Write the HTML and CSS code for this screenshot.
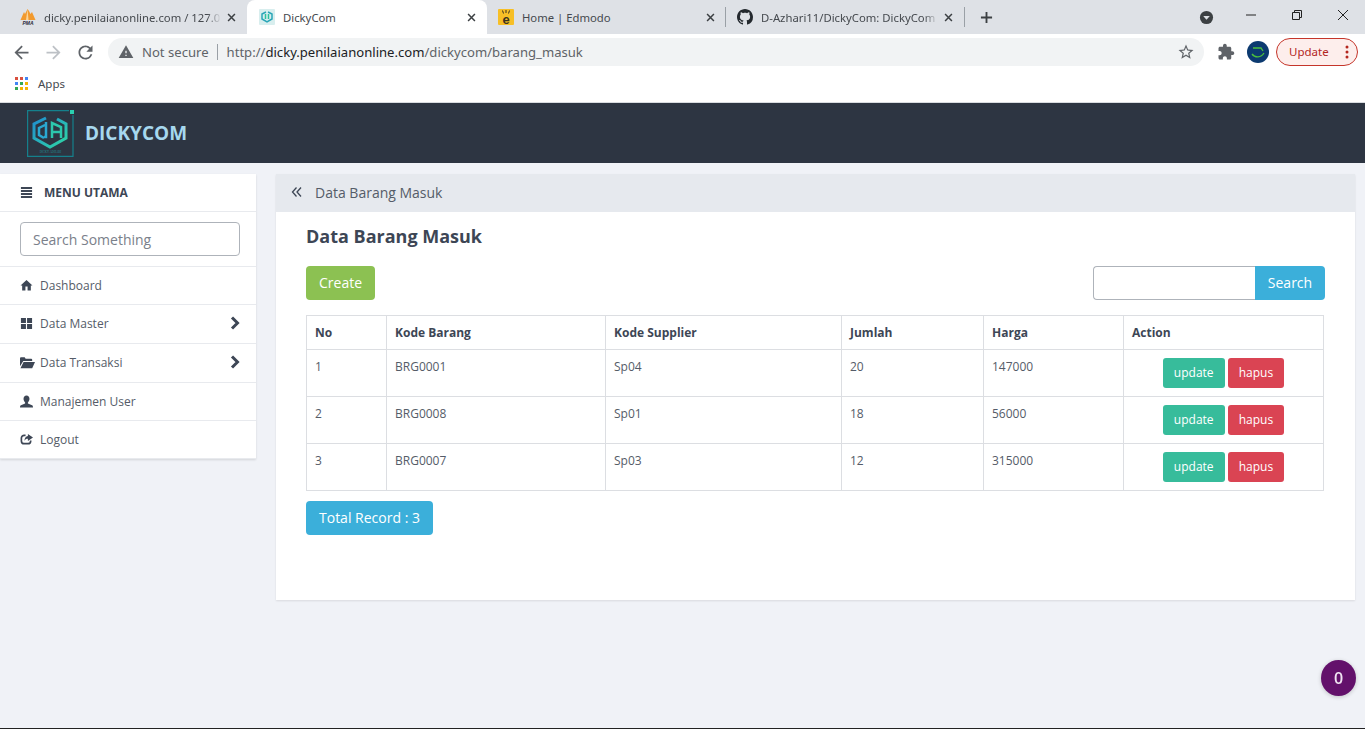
FILE: index.html
```html
<!DOCTYPE html>
<html lang="en">
<head>
    <meta charset="UTF-8">
    <meta name="viewport" content="width=device-width, initial-scale=1.0">
    <title>DickyCom</title>
    <link rel="stylesheet" href="styles.css">
</head>
<body>
    <svg class="defs" width="0" height="0">
        <defs>
            <linearGradient id="logo-grad" x1="0" y1="0" x2="1" y2="1">
                <stop offset="0" stop-color="#1f8fd0"/>
                <stop offset="1" stop-color="#2fd6a4"/>
            </linearGradient>
        </defs>
        <symbol id="tab-x" viewBox="0 0 10 10"><path d="M1.2 1.2l7.6 7.6M8.8 1.2L1.2 8.8" fill="none" stroke="currentColor" stroke-width="1.7"/></symbol>
        <symbol id="chevron" viewBox="0 0 10 14"><path d="M2 1.500L7.500 7 2 12.500" fill="none" stroke="currentColor" stroke-width="3"/></symbol>
    </svg>

    <div class="browser">
        <div class="tabstrip">
            <div class="tab tab-first">
                <svg class="favicon" viewBox="0 0 16 16"><path d="M7.500 0L5 5 4 3 .5 11h15L12 3l-1.500 2L9 2z" fill="#f29a2e"/><path d="M7.500 0l1 11H6z" fill="#fbd59a"/><text x="8" y="16" class="pma">PMA</text></svg>
                <span class="tab-title">dicky.penilaianonline.com / 127.0</span>
                <svg class="tab-close"><use href="#tab-x"/></svg>
            </div>
            <div class="tab tab-active">
                <svg class="favicon" viewBox="0 0 16 16"><rect width="16" height="16" rx="1" fill="#d8eeee"/><path d="M7 3L3 5v5l5 3 5-3V5L9 3" fill="none" stroke="#2aa6b8" stroke-width="1.500"/><path d="M6.500 5v5M9.500 5v5" stroke="#2cc0a0" stroke-width="1.500"/></svg>
                <span class="tab-title plain">DickyCom</span>
                <svg class="tab-close"><use href="#tab-x"/></svg>
            </div>
            <div class="tab tab-edmodo">
                <svg class="favicon" viewBox="0 0 16 16"><rect width="16" height="16" rx="1" fill="#f7bf26"/><text x="8" y="14.500" class="edmodo-e">e</text><path d="M4.500 1.500l1 3M8 1v3M11.500 1.500l-1 3" stroke="#3b3320" stroke-width="1"/></svg>
                <span class="tab-title plain">Home | Edmodo</span>
                <svg class="tab-close"><use href="#tab-x"/></svg>
            </div>
            <div class="tab tab-github">
                <svg class="favicon" viewBox="0 0 16 16"><path fill="#24292e" d="M8 0C3.580 0 0 3.580 0 8c0 3.540 2.290 6.530 5.470 7.590.4.070.55-.17.55-.38 0-.19-.01-.82-.01-1.490-2.010.37-2.530-.49-2.690-.94-.09-.23-.48-.94-.82-1.130-.28-.15-.68-.52-.01-.53.63-.01 1.080.58 1.230.82.72 1.210 1.870.87 2.330.66.07-.52.28-.87.51-1.070-1.780-.2-3.640-.89-3.640-3.950 0-.87.31-1.590.82-2.150-.08-.2-.36-1.020.08-2.120 0 0 .67-.21 2.200.82.64-.18 1.320-.27 2-.27.68 0 1.360.09 2 .27 1.530-1.040 2.200-.82 2.200-.82.44 1.100.16 1.920.08 2.120.51.56.82 1.270.82 2.150 0 3.070-1.870 3.750-3.650 3.950.29.25.54.73.54 1.480 0 1.070-.01 1.930-.01 2.200 0 .21.15.46.55.38A8.013 8.013 0 0016 8c0-4.420-3.580-8-8-8z"/></svg>
                <span class="tab-title">D-Azhari11/DickyCom: DickyCom</span>
                <svg class="tab-close"><use href="#tab-x"/></svg>
            </div>
            <svg class="new-tab" viewBox="0 0 14 14"><path d="M7 1v12M1 7h12" fill="none" stroke="#3c4043" stroke-width="2"/></svg>
            <div class="window-controls">
                <svg class="tab-search" viewBox="0 0 16 16"><circle cx="8" cy="8" r="7" fill="#3c4043"/><path d="M4.500 6.500h7L8 10.500z" fill="#dee1e6"/></svg>
                <svg class="win-btn" viewBox="0 0 12 12"><path d="M1 6h10" stroke="#222" fill="none"/></svg>
                <svg class="win-btn" viewBox="0 0 12 12"><path d="M1.500 3.500h7v7h-7zM3.500 3.500v-2h7v7h-2" stroke="#222" fill="none"/></svg>
                <svg class="win-btn" viewBox="0 0 12 12"><path d="M1 1l10 10M11 1L1 11" stroke="#222" fill="none"/></svg>
            </div>
        </div>

        <div class="toolbar">
            <svg class="nav-icon" viewBox="0 0 24 24"><path fill="#5f6368" d="M20 11H7.830l5.590-5.590L12 4l-8 8 8 8 1.410-1.410L7.830 13H20v-2z"/></svg>
            <svg class="nav-icon" viewBox="0 0 24 24"><path fill="#bdc1c6" d="M12 4l-1.410 1.410L16.170 11H4v2h12.170l-5.580 5.590L12 20l8-8z"/></svg>
            <svg class="nav-icon" viewBox="0 0 24 24"><path fill="#5f6368" d="M17.650 6.350A7.958 7.958 0 0012 4c-4.420 0-7.990 3.580-7.990 8s3.570 8 7.990 8c3.730 0 6.840-2.550 7.730-6h-2.080A5.990 5.990 0 0112 18c-3.310 0-6-2.690-6-6s2.690-6 6-6c1.660 0 3.140.69 4.220 1.780L13 11h7V4l-2.350 2.350z"/></svg>
            <div class="omnibox">
                <svg class="warn-icon" viewBox="0 0 24 24"><path fill="#5f6368" d="M1 21h22L12 2 1 21zm12-3h-2v-2h2v2zm0-4h-2v-4h2v4z"/></svg>
                <span class="not-secure">Not secure</span>
                <span class="url"><span class="url-dim">http://</span>dicky.penilaianonline.com<span class="url-dim">/dickycom/barang_masuk</span></span>
                <svg class="star-icon" viewBox="0 0 24 24"><path fill="#5f6368" d="M22 9.240l-7.190-.62L12 2 9.190 8.630 2 9.240l5.460 4.730L5.820 21 12 17.270 18.180 21l-1.630-7.030L22 9.240zM12 15.400l-3.760 2.270 1-4.280-3.320-2.880 4.380-.38L12 6.100l1.710 4.040 4.380.38-3.320 2.880 1 4.280L12 15.400z"/></svg>
            </div>
            <svg class="puzzle-icon" viewBox="0 0 24 24"><path fill="#5f6368" d="M20.500 11H19V7c0-1.100-.9-2-2-2h-4V3.500C13 2.120 11.880 1 10.500 1S8 2.120 8 3.500V5H4c-1.100 0-1.990.9-1.990 2v3.800H3.500c1.490 0 2.700 1.210 2.700 2.700s-1.210 2.700-2.700 2.700H2V20c0 1.100.9 2 2 2h3.800v-1.500c0-1.490 1.210-2.700 2.700-2.700 1.490 0 2.700 1.210 2.700 2.700V22H17c1.100 0 2-.9 2-2v-4h1.500c1.380 0 2.500-1.120 2.500-2.500S21.880 11 20.500 11z"/></svg>
            <svg class="avatar" viewBox="0 0 22 22"><circle cx="11" cy="11" r="11" fill="#0c3a70"/><path d="M6 7h8l2 3M5 13c3 4 9 4 12-1" fill="none" stroke="#4cc23c" stroke-width="1.300"/></svg>
            <div class="update-pill">
                <span class="update-label">Update</span>
                <svg class="dots" viewBox="0 0 4 14"><circle cx="2" cy="2" r="1.500"/><circle cx="2" cy="7" r="1.500"/><circle cx="2" cy="12" r="1.500"/></svg>
            </div>
        </div>

        <div class="bookmarks">
            <svg class="apps-icon" viewBox="0 0 14 14">
                <rect width="3" height="3" fill="#d9503f"/><rect x="5" width="3" height="3" fill="#d9503f"/><rect x="10" width="3" height="3" fill="#4285f4"/>
                <rect y="5" width="3" height="3" fill="#4285f4"/><rect x="5" y="5" width="3" height="3" fill="#34a853"/><rect x="10" y="5" width="3" height="3" fill="#f4b400"/>
                <rect y="10" width="3" height="3" fill="#34a853"/><rect x="5" y="10" width="3" height="3" fill="#f4b400"/><rect x="10" y="10" width="3" height="3" fill="#f4b400"/>
            </svg>
            <span>Apps</span>
        </div>
    </div>

    <header class="app-header">
        <svg class="app-logo" viewBox="0 0 47 47">
            <path d="M42 .6H.6v45.800H46V5" fill="none" stroke="#15808c" stroke-width="1.200"/>
            <rect x="43" y="0" width="4" height="4" fill="#2bd0b0"/>
            <path d="M19 8L7 14v14l16 9 16-9V14L30 9" fill="none" stroke="url(#logo-grad)" stroke-width="3"/>
            <path d="M19 12v15h-2M18 15l-6 3v7l5 3" fill="none" stroke="#2aa9d2" stroke-width="2.500"/>
            <path d="M25 28V13l9 4v11M25 22h9" fill="none" stroke="#2cc7ad" stroke-width="2.500"/>
            <text x="23.500" y="43" class="logo-small">DICKY ADHARI</text>
        </svg>
        <span class="brand">DICKYCOM</span>
    </header>

    <div class="page">
        <aside class="sidebar">
            <div class="menu-title">
                <svg class="icon" viewBox="0 0 14 14"><path d="M1 1h12v2.200H1zM1 4.300h12v2.200H1zM1 7.500h12v2.200H1zM1 10.800h12V13H1z"/></svg>
                MENU UTAMA
            </div>
            <div class="menu-search"><input type="text" placeholder="Search Something"></div>
            <a class="menu-item">
                <svg class="icon" viewBox="0 0 24 24"><path d="M10 21v-7h4v7h6v-9h3L12 2 1 12h3v9z"/></svg>
                Dashboard
            </a>
            <a class="menu-item item-tall">
                <svg class="icon" viewBox="0 0 14 14"><path d="M1 1h5.400v5.400H1zM7.600 1H13v5.400H7.600zM1 7.600h5.400V13H1zM7.600 7.600H13V13H7.600z"/></svg>
                Data Master
                <svg class="chevron"><use href="#chevron"/></svg>
            </a>
            <a class="menu-item item-tall">
                <svg class="icon icon-folder" viewBox="0 0 16 13"><path d="M0 2.500C0 1.500.5 1 1.500 1H5l1 1.500h6c.6 0 1 .4 1 1V5H3.500L0 10.500zM3.800 6H16l-3 6.500H.5z"/></svg>
                Data Transaksi
                <svg class="chevron"><use href="#chevron"/></svg>
            </a>
            <a class="menu-item">
                <svg class="icon" viewBox="0 0 14 14"><path d="M7 .5c2 0 3.200 1.500 3.200 3.600 0 1.700-.8 3.100-1.700 3.900v1.200l4.500 1.800c.7.300 1 1 1 2.500H0c0-1.500.3-2.200 1-2.500l4.500-1.800V8c-.9-.8-1.700-2.200-1.700-3.900C3.800 2 5 .5 7 .5z"/></svg>
                Manajemen User
            </a>
            <a class="menu-item">
                <svg class="icon" viewBox="0 0 14 14"><path d="M6 2.500H4.500a3 3 0 00-3 3v3a3 3 0 003 3h4a3 3 0 003-3V8" fill="none" stroke="#3d4655" stroke-width="1.800"/><path d="M8.500 1L14 4.800 8.500 8.500V6.300C6.500 6.300 5.500 7 4.800 8.500 4.800 5.500 6.300 3.500 8.500 3.300z"/></svg>
                Logout
            </a>
        </aside>

        <main class="content">
            <div class="breadcrumb">
                <svg class="crumb-icon" viewBox="0 0 12 12"><path d="M5.500 1.500L1.500 6l4 4.500M10 1.500L6 6l4 4.500" fill="none" stroke="#3d4655" stroke-width="1.300"/></svg>
                Data Barang Masuk
            </div>
            <div class="panel">
                <h1>Data Barang Masuk</h1>
                <div class="table-tools">
                    <a class="btn btn-green">Create</a>
                    <form class="search-form">
                        <input type="text">
                        <button type="button" class="btn btn-blue">Search</button>
                    </form>
                </div>
                <table>
                    <colgroup>
                        <col class="col-no"><col class="col-kode"><col class="col-supplier"><col class="col-jumlah"><col class="col-harga"><col class="col-action">
                    </colgroup>
                    <tr><th>No</th><th>Kode Barang</th><th>Kode Supplier</th><th>Jumlah</th><th>Harga</th><th>Action</th></tr>
                    <tr>
                        <td>1</td><td>BRG0001</td><td>Sp04</td><td>20</td><td>147000</td>
                        <td class="actions"><a class="btn-sm btn-teal">update</a> <a class="btn-sm btn-red">hapus</a></td>
                    </tr>
                    <tr>
                        <td>2</td><td>BRG0008</td><td>Sp01</td><td>18</td><td>56000</td>
                        <td class="actions"><a class="btn-sm btn-teal">update</a> <a class="btn-sm btn-red">hapus</a></td>
                    </tr>
                    <tr>
                        <td>3</td><td>BRG0007</td><td>Sp03</td><td>12</td><td>315000</td>
                        <td class="actions"><a class="btn-sm btn-teal">update</a> <a class="btn-sm btn-red">hapus</a></td>
                    </tr>
                </table>
                <a class="btn btn-blue total">Total Record : 3</a>
            </div>
        </main>
    </div>

    <div class="notif-badge">0</div>
</body>
</html>
```

FILE: styles.css
```css
* {
    box-sizing: border-box;
}
html, body {
    height: 100%;
}
body {
    margin: 0;
    height: 729px;
    overflow: hidden;
    font-family: "Open Sans", Arial, sans-serif;
    font-size: 13px;
    color: #3d4655;
    background: #f0f2f7;
    border-bottom: 1px solid #222;
}
a {
    text-decoration: none;
}
.defs {
    display: block;
    height: 0;
}

/* browser chrome */
.browser {
    font-family: "Noto Sans", Arial, sans-serif;
    height: 103px;
    background: #fff;
    border-bottom: 1px solid #d9dce0;
}
.tabstrip {
    display: flex;
    align-items: center;
    height: 34px;
    background: #dee1e6;
}
.tab {
    display: flex;
    align-items: center;
    height: 34px;
    font-size: 11.300px;
    color: #45494e;
}
.tab-first {
    width: 247px;
    padding: 0 11px 0 20px;
}
.tab-active {
    width: 240px;
    padding: 0 11px 0 12px;
    background: #fff;
    border-radius: 8px 8px 0 0;
}
.tab-edmodo {
    width: 238px;
    padding: 0 10px 0 11px;
}
.tab-github {
    width: 240px;
    padding: 0 11px 0 11px;
    border-left: 1px solid #9aa0a6;
    border-right: 1px solid #9aa0a6;
    height: 20px;
}
.favicon {
    flex: none;
    width: 16px;
    height: 16px;
    margin-right: 8px;
}
.tab-title {
    flex: 1;
    white-space: nowrap;
    -webkit-mask-image: linear-gradient(to left, transparent, #000 14px);
    mask-image: linear-gradient(to left, transparent, #000 14px);
}
.tab-title.plain {
    -webkit-mask-image: none;
    mask-image: none;
}
.tab-close {
    flex: none;
    width: 9px;
    height: 9px;
    margin-left: 6px;
    color: #3c4043;
}
.pma {
    font: italic bold 5px "Liberation Sans", sans-serif;
    text-anchor: middle;
    fill: #2a2a3a;
}
.edmodo-e {
    font: bold 13px "Liberation Sans", sans-serif;
    text-anchor: middle;
    fill: #3b3320;
}
.new-tab {
    width: 13px;
    height: 13px;
    margin-left: 15px;
}
.window-controls {
    display: flex;
    align-items: center;
    margin-left: auto;
    padding-right: 16px;
    margin-top: -4px;
}
.tab-search {
    width: 15px;
    height: 15px;
    margin-right: 31px;
    margin-top: 4px;
}
.win-btn {
    width: 12px;
    height: 12px;
    margin-left: 34px;
}
.tab-search + .win-btn {
    margin-left: 0;
}
.toolbar {
    display: flex;
    align-items: center;
    height: 36px;
    padding: 0 7px 0 11px;
}
.nav-icon {
    width: 21px;
    height: 21px;
    margin-right: 11px;
}
.omnibox {
    display: flex;
    align-items: center;
    width: 1096px;
    height: 28px;
    margin-left: 1px;
    padding: 0 9px 0 10px;
    background: #f1f3f4;
    border-radius: 14px;
    font-size: 13.100px;
    color: #202124;
}
.warn-icon {
    width: 16px;
    height: 16px;
}
.not-secure {
    margin-left: 8px;
    padding-right: 8px;
    color: #5f6368;
    border-right: 1px solid #9aa0a6;
    line-height: 16px;
}
.url {
    margin-left: 9px;
}
.url-dim {
    color: #5f6368;
}
.star-icon {
    width: 18px;
    height: 18px;
    margin-left: auto;
}
.puzzle-icon {
    width: 18px;
    height: 18px;
    margin-left: 13px;
}
.avatar {
    width: 22px;
    height: 22px;
    margin-left: 12px;
}
.update-pill {
    display: flex;
    align-items: center;
    justify-content: space-between;
    width: 82px;
    height: 28px;
    margin-left: 7px;
    padding: 0 8px 0 12px;
    font-size: 11.500px;
    color: #b3261e;
    background: #fdeeec;
    border: 1px solid #c5352a;
    border-radius: 14px;
}
.update-label {
    padding-bottom: 2px;
}
.dots {
    width: 4px;
    height: 14px;
    fill: #b3261e;
}
.bookmarks {
    display: flex;
    align-items: center;
    height: 27px;
    padding-left: 15px;
    font-size: 11.500px;
    color: #45494e;
}
.apps-icon {
    width: 14px;
    height: 14px;
    margin-right: 9px;
}

/* app */
.app-header {
    display: flex;
    align-items: center;
    height: 60px;
    padding-left: 27px;
    background: #2d3542;
}
.app-logo {
    width: 47px;
    height: 47px;
}
.logo-small {
    font: 3px "Liberation Serif", serif;
    text-anchor: middle;
    fill: #1e8f95;
}
.brand {
    margin-left: 11px;
    font-size: 19px;
    font-weight: 700;
    color: #a6d8ee;
}
.page {
    display: flex;
    align-items: flex-start;
    gap: 20px;
    padding: 11px 10px 0 0;
}
.sidebar {
    flex: none;
    width: 256px;
    background: #fff;
    box-shadow: 0 1px 2px rgba(0, 0, 0, .12);
}
.menu-title {
    display: flex;
    align-items: center;
    height: 38px;
    padding-left: 20px;
    font-size: 12px;
    font-weight: 700;
    border-bottom: 1px solid #e8eaee;
}
.menu-title .icon {
    margin-right: 11px;
}
.icon {
    flex: none;
    width: 13px;
    height: 13px;
    margin-right: 7px;
    fill: #3d4655;
}
.icon-folder {
    width: 15px;
    margin-right: 5px;
}
.menu-search {
    padding: 10px 16px 10px 20px;
    border-bottom: 1px solid #e8eaee;
}
.menu-search input {
    display: block;
    width: 100%;
    height: 34px;
    padding: 0 12px;
    font: 14px "Open Sans", Arial, sans-serif;
    border: 1px solid #aeb3ba;
    border-radius: 4px;
}
.menu-search input::placeholder {
    color: #7a808a;
}
.menu-item {
    display: flex;
    align-items: center;
    height: 38px;
    padding: 0 16px 0 20px;
    font-size: 12px;
    color: #555c68;
    border-bottom: 1px solid #e8eaee;
}
.item-tall {
    height: 39px;
    padding-bottom: 2px;
}
.chevron {
    width: 10px;
    height: 14px;
    margin-left: auto;
    color: #3d4655;
}
.content {
    flex: 1;
    background: #fff;
    box-shadow: 0 1px 2px rgba(0, 0, 0, .1);
}
.breadcrumb {
    display: flex;
    align-items: center;
    height: 38px;
    padding: 0 0 2px 15px;
    font-size: 14px;
    color: #555c68;
    background: #e6e9ee;
}
.crumb-icon {
    width: 12px;
    height: 12px;
    margin-right: 12px;
}
.panel {
    height: 388px;
    padding: 11px 30px 0;
}
h1 {
    margin: 0 0 17px;
    font-size: 18px;
    font-weight: 700;
    line-height: 26px;
}
.table-tools {
    display: flex;
    justify-content: space-between;
    margin-bottom: 15px;
}
.btn {
    display: inline-block;
    height: 34px;
    padding: 0 13px;
    font: 14px/34px "Open Sans", Arial, sans-serif;
    color: #fff;
    border: none;
    border-radius: 4px;
}
.btn-green {
    background: #8cc152;
}
.btn-blue {
    background: #3bafda;
}
.search-form {
    display: flex;
}
.search-form input {
    width: 162px;
    height: 34px;
    border: 1px solid #aeb3ba;
    border-right: none;
    border-radius: 4px 0 0 4px;
}
.search-form .btn {
    width: 70px;
    padding: 0;
    border-radius: 0 4px 4px 0;
}
table {
    width: 1018px;
    border-collapse: collapse;
    table-layout: fixed;
    font-size: 12px;
}
.col-no { width: 80px; }
.col-kode { width: 219px; }
.col-supplier { width: 236px; }
.col-jumlah { width: 142px; }
.col-harga { width: 140px; }
.col-action { width: 200px; }
th, td {
    padding: 8px;
    text-align: left;
    vertical-align: top;
    line-height: 17px;
    border: 1px solid #dcdee2;
}
th {
    height: 34px;
    font-weight: 700;
}
td {
    height: 47px;
    color: #555c68;
}
.actions {
    text-align: center;
    white-space: nowrap;
}
.btn-sm {
    display: inline-block;
    height: 30px;
    padding: 0 11px;
    font-size: 12px;
    line-height: 30px;
    color: #fff;
    border-radius: 3px;
}
.btn-teal {
    background: #37bc9b;
}
.btn-red {
    background: #da4453;
}
.total {
    margin-top: 10px;
}
.notif-badge {
    position: fixed;
    right: 9px;
    bottom: 33px;
    width: 35px;
    height: 36px;
    font-size: 16px;
    font-weight: 600;
    line-height: 36px;
    text-align: center;
    color: #f0e4f2;
    background: #63116b;
    border-radius: 50%;
    box-shadow: 0 1px 4px rgba(0, 0, 0, .2);
}
```
